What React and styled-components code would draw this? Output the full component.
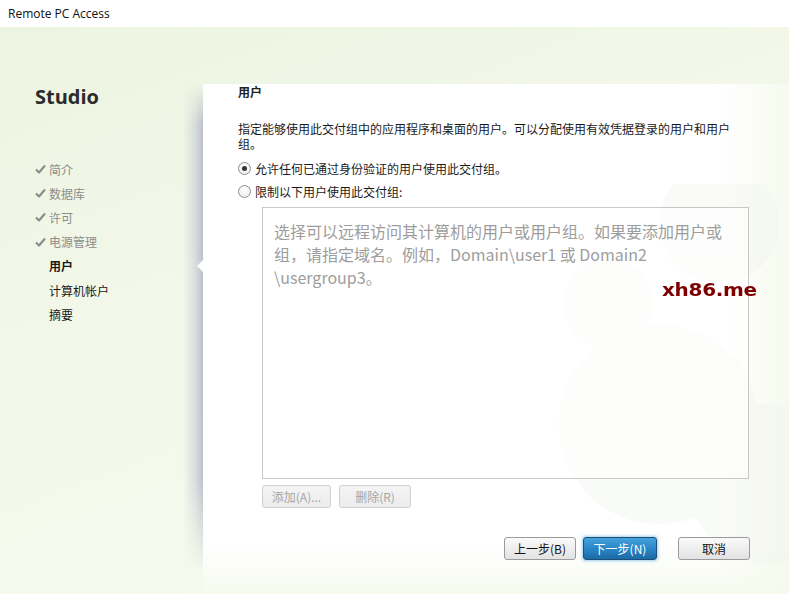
import React from "react";
import styled, { createGlobalStyle, css } from "styled-components";

const Global = createGlobalStyle`
  html, body { margin: 0; padding: 0; }
  body {
    width: 789px; height: 594px; overflow: hidden;
    font-family: "Noto Sans CJK SC", "Noto Sans", sans-serif;
    font-size: 12px; color: #1a1a1a;
  }
`;

const Window = styled.div`
  width: 789px; height: 594px; display: flex; flex-direction: column;
  position: relative; overflow: hidden;
`;

const TitleBar = styled.div`
  height: 27px; flex: none; background: #fff; display: flex; align-items: center;
  padding-left: 8px; padding-bottom: 1px; box-sizing: border-box;
  font-family: "Open Sans", "Noto Sans", sans-serif; font-size: 12px; color: #111;
`;

const Body = styled.div`
  flex: 1; display: flex; position: relative;
  background: linear-gradient(160deg, #edf4e0 0%, #f3f8ea 40%, #f8fbf1 100%);
`;

const Sidebar = styled.div`
  width: 203px; flex: none; position: relative; box-sizing: border-box;
  padding-top: 56px;
  &::before {
    content: ""; position: absolute; right: 0; top: 57px; bottom: 22px; width: 20px;
    background: linear-gradient(to right, rgba(200,204,214,0) 0%, rgba(196,200,210,0.55) 60%, rgba(186,190,200,0.95) 100%);
    -webkit-mask-image: linear-gradient(to bottom, transparent 0, #000 40px, #000 calc(100% - 90px), transparent 100%);
    mask-image: linear-gradient(to bottom, transparent 0, #000 40px, #000 calc(100% - 90px), transparent 100%);
  }
`;

const Brand = styled.div`
  font-family: "Open Sans", "Noto Sans", sans-serif; font-weight: 700; font-size: 20px;
  color: #2b2b2b; padding-left: 35px; height: 28px; line-height: 28px;
`;

const NavList = styled.div`
  margin-top: 46px; display: flex; flex-direction: column;
`;

const NavItem = styled.div`
  position: relative; height: 24.2px; display: flex; align-items: center;
  padding-left: 35px; font-size: 12px;
  color: ${p => (p.$done ? "#8c8c8c" : "#1a1a1a")};
  font-weight: ${p => (p.$active ? 700 : 400)};
  ${p => p.$active && css`
    &::after {
      content: ""; position: absolute; right: 0; top: 50%; margin-top: -6px;
      border-style: solid; border-width: 6px 6px 6px 0;
      border-color: transparent #fff transparent transparent;
    }
  `}
`;

const Check = styled.span`
  width: 14px; display: inline-flex; align-items: center;
`;

const Panel = styled.div`
  flex: 1; margin-top: 57px; position: relative; padding-left: 35px;
  background:
    linear-gradient(to right, rgba(246,250,238,0) 88%, rgba(246,250,238,1) 100%),
    linear-gradient(to bottom, rgba(246,250,238,0) 90%, rgba(246,250,238,1) 100%),
    #fff;
`;

const Deco = styled.svg`
  position: absolute; right: 0; top: 100px; pointer-events: none;
`;

const Content = styled.div`
  width: 512px; position: relative; display: flex; flex-direction: column;
`;

const Heading = styled.div`
  font-weight: 700; font-size: 12px; line-height: 16px; color: #222;
`;

const Desc = styled.div`
  margin-top: 21px; width: 500px; line-height: 15px; font-size: 12px; color: #1a1a1a;
`;

const RadioRow = styled.label`
  display: flex; align-items: center; height: 23px; gap: 4px; font-size: 12px; color: #1a1a1a;
  margin-top: ${p => p.$first ? "6px" : "0"};
`;

const RadioDot = styled.span`
  width: 13px; height: 13px; box-sizing: border-box; border-radius: 50%;
  border: 1px solid #8e8f8f;
  background: radial-gradient(circle at 50% 35%, #ffffff 0%, #e9e9e9 100%);
  display: inline-flex; align-items: center; justify-content: center;
  &::after {
    content: ""; width: 5px; height: 5px; border-radius: 50%;
    background: ${p => (p.$checked ? "#333" : "transparent")};
  }
`;

const UserBox = styled.div`
  margin-top: 4px; margin-left: 24px; width: 487px; height: 272px; box-sizing: border-box;
  border: 1px solid #c8c8c8; background: rgba(255,255,255,0.6);
  padding: 12px 18px 0 11px; color: #9d9d9d; font-size: 16px; line-height: 23px;
`;

const SmallRow = styled.div`
  margin-left: 24px; margin-top: 6px; display: flex; gap: 8px;
`;

const Btn = styled.button`
  width: ${p => p.$w}px; height: 23px; box-sizing: border-box; padding: 0;
  font-family: "Noto Sans CJK SC", "Noto Sans", sans-serif; font-size: 12px;
  border-radius: 3px; border: 1px solid #9a9a9a; color: #111;
  background: linear-gradient(to bottom, #fafafa 0%, #eeeeee 50%, #e2e2e2 100%);
  ${p => p.$disabled && css`
    border-color: #d0d0d0; color: #a6a6a6;
    background: linear-gradient(to bottom, #f4f4f4, #ececec);
  `}
  ${p => p.$primary && css`
    color: #fff; border-color: #1c4f7a;
    background: linear-gradient(to bottom, #45a3dd 0%, #2a86c6 50%, #1b6aa6 100%);
    box-shadow: 0 0 3px 1px rgba(80,160,220,0.55);
  `}
`;

const Footer = styled.div`
  margin-top: 29px; display: flex; justify-content: flex-end; align-items: center;
`;

const Watermark = styled.div`
  position: absolute; left: 662px; top: 278px;
  font-family: "DejaVu Sans", sans-serif; font-weight: 700; font-size: 20px;
  color: #7d0000; letter-spacing: -0.3px; transform: scaleY(0.85); transform-origin: left center;
`;

const CheckIcon = () => (
  <svg width="11" height="10" viewBox="0 0 11 10">
    <path d="M1 5.5 L4 8.5 L10 1.5" fill="none" stroke="#8d8d8d" strokeWidth="2.2" strokeLinejoin="round" />
  </svg>
);

const steps = [
  { t: "简介", done: true },
  { t: "数据库", done: true },
  { t: "许可", done: true },
  { t: "电源管理", done: true },
  { t: "用户", active: true },
  { t: "计算机帐户" },
  { t: "摘要" },
];

export default function App() {
  return (
    <Window>
      <Global />
      <TitleBar>Remote PC Access</TitleBar>
      <Body>
        <Sidebar>
          <Brand>Studio</Brand>
          <NavList>
            {steps.map(s => (
              <NavItem key={s.t} $done={s.done} $active={s.active}>
                <Check>{s.done && <CheckIcon />}</Check>
                {s.t}
              </NavItem>
            ))}
          </NavList>
        </Sidebar>
        <Panel>
          <Deco width="320" height="420" viewBox="0 0 320 420">
            <g fill="#eef2ea" opacity="0.3">
              <circle cx="250" cy="40" r="60" />
              <circle cx="140" cy="120" r="45" />
              <circle cx="190" cy="240" r="100" />
              <circle cx="300" cy="300" r="80" />
            </g>
          </Deco>
          <Content>
            <Heading>用户</Heading>
            <Desc>指定能够使用此交付组中的应用程序和桌面的用户。可以分配使用有效凭据登录的用户和用户组。</Desc>
            <RadioRow $first>
              <RadioDot $checked />
              允许任何已通过身份验证的用户使用此交付组。
            </RadioRow>
            <RadioRow>
              <RadioDot />
              限制以下用户使用此交付组:
            </RadioRow>
            <UserBox>
              选择可以远程访问其计算机的用户或用户组。如果要添加用户或组，请指定域名。例如，Domain\user1 或 Domain2 \usergroup3。
            </UserBox>
            <SmallRow>
              <Btn $w={69} $disabled>添加(A)...</Btn>
              <Btn $w={72} $disabled>删除(R)</Btn>
            </SmallRow>
            <Footer>
              <Btn $w={72}>上一步(B)</Btn>
              <Btn $w={74} $primary style={{ marginLeft: 7 }}>下一步(N)</Btn>
              <Btn $w={72} style={{ marginLeft: 21 }}>取消</Btn>
            </Footer>
          </Content>
        </Panel>
      </Body>
      <Watermark>xh86.me</Watermark>
    </Window>
  );
}
